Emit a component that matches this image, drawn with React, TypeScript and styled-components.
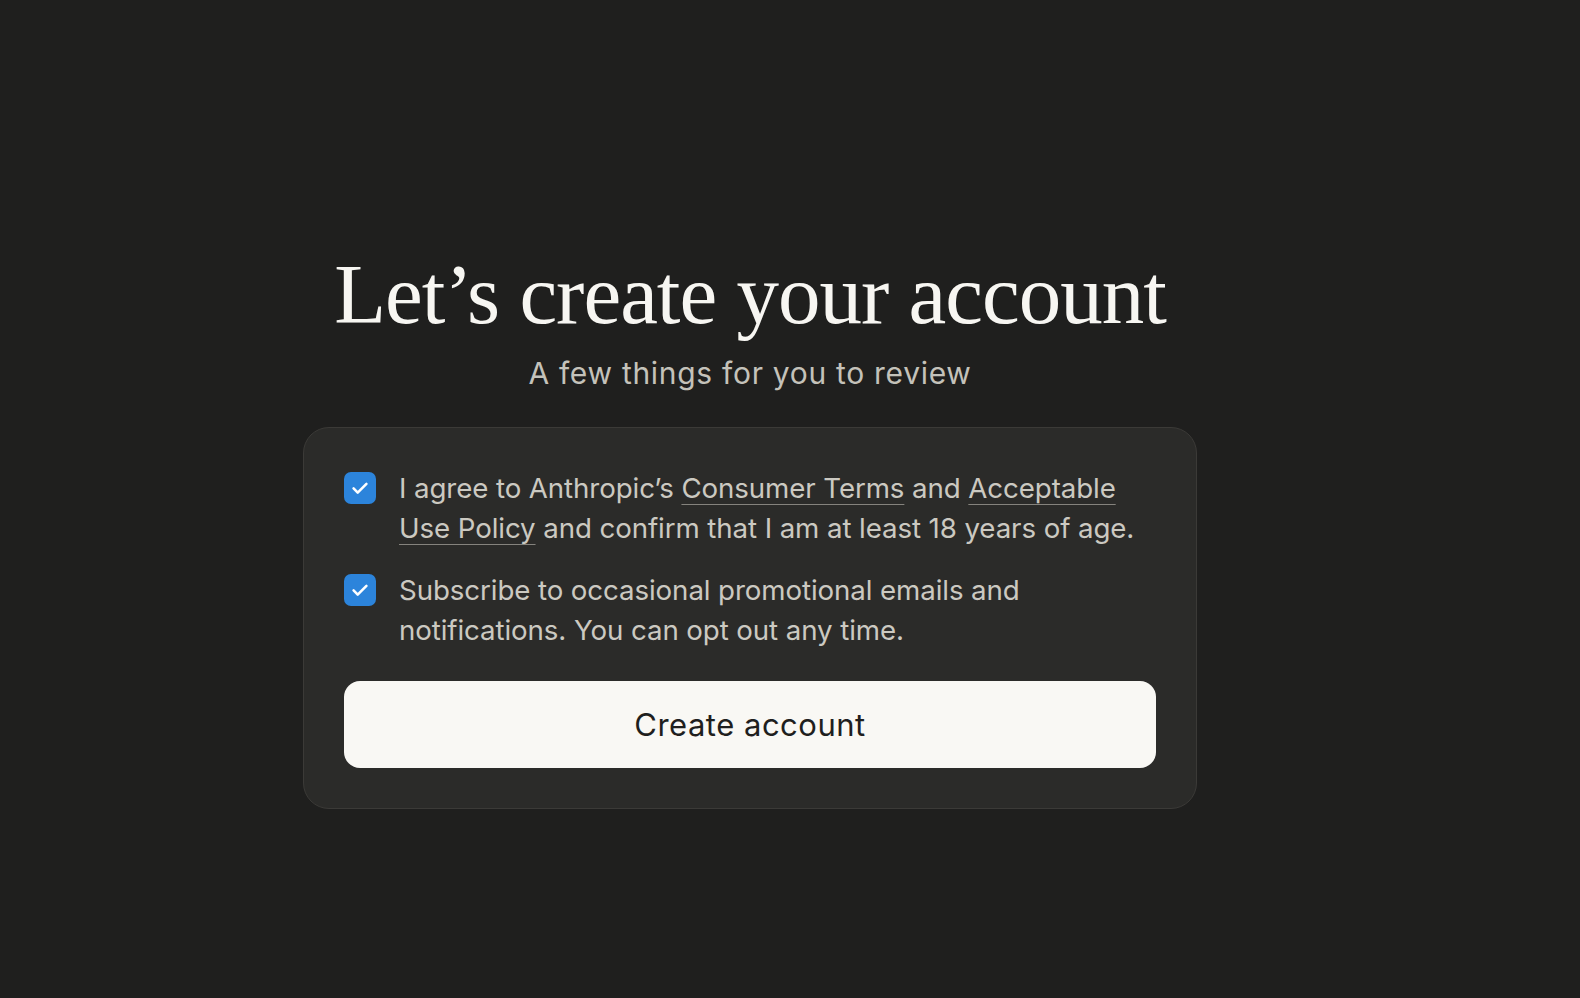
import React from "react";
import styled, { createGlobalStyle } from "styled-components";

const Global = createGlobalStyle`
  html, body { margin: 0; padding: 0; background: #1f1f1e; }
  body { font-family: Inter, "Noto Sans", sans-serif; }
`;

const Page = styled.main`
  box-sizing: border-box;
  min-height: 998px;
  width: calc(100% - 80px);
  padding-top: 243px;
  display: flex;
  flex-direction: column;
  align-items: center;
`;

const Title = styled.h1`
  margin: 0;
  font-family: "Liberation Serif", serif;
  font-weight: 400;
  font-size: 85px;
  line-height: 102px;
  letter-spacing: -1px;
  color: #f7f6f2;
`;

const Subtitle = styled.p`
  margin: 8px 0 0;
  font-family: Inter, sans-serif;
  font-size: 30px;
  line-height: 40px;
  letter-spacing: 0.7px;
  color: #c4c2ba;
`;

const Card = styled.section`
  box-sizing: border-box;
  margin-top: 34px;
  width: 894px;
  padding: 40px;
  background: #2b2b29;
  border: 1px solid #3b3a37;
  border-radius: 26px;
  display: flex;
  flex-direction: column;
`;

const Row = styled.label<{ $gap?: number }>`
  display: grid;
  grid-template-columns: 32px 1fr;
  column-gap: 23px;
  margin-top: ${(p) => p.$gap ?? 0}px;
  cursor: pointer;
`;

const Box = styled.span`
  margin-top: 4px;
  width: 32px;
  height: 32px;
  border-radius: 7px;
  background: #2c84db;
  display: flex;
  align-items: center;
  justify-content: center;
`;

const Text = styled.span`
  font-family: Inter, sans-serif;
  font-size: 27.7px;
  line-height: 40px;
  letter-spacing: -0.1px;
  color: #cbc9c1;
`;

const Link = styled.a`
  color: inherit;
  text-decoration: underline;
  text-decoration-color: #85837d;
  text-decoration-thickness: 1px;
  text-underline-offset: 6px;
`;

const Button = styled.button`
  margin-top: 31px;
  height: 87px;
  width: 100%;
  border: none;
  border-radius: 16px;
  background: #f9f8f4;
  color: #1f1f1e;
  font-family: Inter, sans-serif;
  font-size: 31px;
  font-weight: 400;
  letter-spacing: 0.5px;
  cursor: pointer;
`;

const Check = () => (
  <svg width="22" height="22" viewBox="0 0 24 24" fill="none">
    <path
      d="M5 12.5l4.5 4.5L19 7.5"
      stroke="#fff"
      strokeWidth="2.8"
      strokeLinecap="round"
      strokeLinejoin="round"
    />
  </svg>
);

export default function App() {
  return (
    <>
      <Global />
      <Page>
        <Title>Let’s create your account</Title>
        <Subtitle>A few things for you to review</Subtitle>
        <Card>
          <Row>
            <Box>
              <Check />
            </Box>
            <Text>
              I agree to Anthropic’s <Link href="#">Consumer Terms</Link> and{" "}
              <Link href="#">Acceptable Use Policy</Link> and confirm that I am
              at least 18 years of age.
            </Text>
          </Row>
          <Row $gap={22}>
            <Box>
              <Check />
            </Box>
            <Text>
              Subscribe to occasional promotional emails and notifications. You
              can opt out any time.
            </Text>
          </Row>
          <Button>Create account</Button>
        </Card>
      </Page>
    </>
  );
}
